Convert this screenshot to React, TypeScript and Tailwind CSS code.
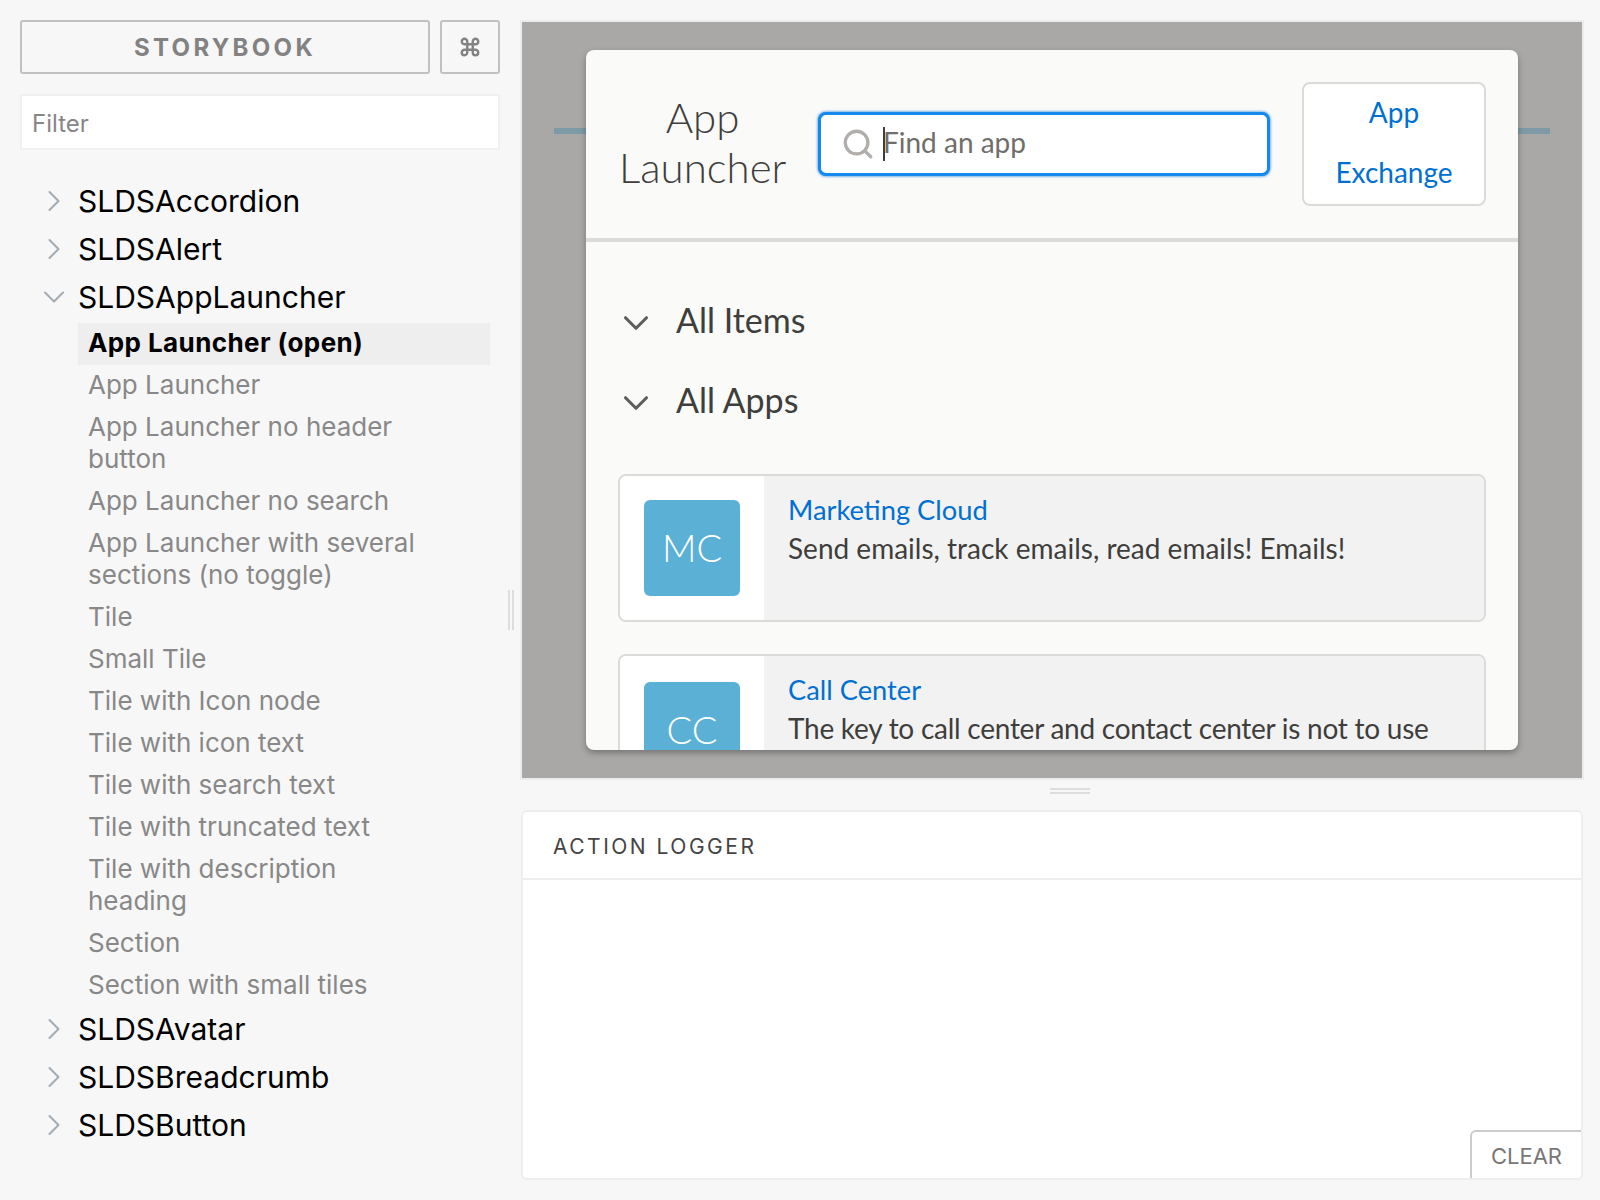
import { ChevronDown, ChevronRight, Command, Search } from "lucide-react";

const sans = "font-['Inter','Liberation_Sans',sans-serif]";
const card = "font-['Lato','Open_Sans',sans-serif]";

const children = [
  "App Launcher",
  "App Launcher no header button",
  "App Launcher no search",
  "App Launcher with several sections (no toggle)",
  "Tile",
  "Small Tile",
  "Tile with Icon node",
  "Tile with icon text",
  "Tile with search text",
  "Tile with truncated text",
  "Tile with description heading",
  "Section",
  "Section with small tiles",
];

const TreeRoot = ({ label, open = false }: { label: string; open?: boolean }) => (
  <div className="flex h-[48px] items-center">
    <div className="w-[78px] shrink-0 pl-[36px]">
      {open ? (
        <ChevronDown size={36} strokeWidth={1.4} className="text-[#a3acb3]" />
      ) : (
        <ChevronRight size={36} strokeWidth={1.4} className="text-[#a3acb3]" />
      )}
    </div>
    <span className="text-[30px] leading-[32px] text-black">{label}</span>
  </div>
);

const Tile = ({ initials, title, text, low = false }: { initials: string; title: string; text: string; low?: boolean }) => (
  <div className="flex h-[148px] shrink-0 overflow-hidden rounded-[8px] border-2 border-[#dddbda]">
    <div className={`w-[144px] shrink-0 bg-white pl-[24px] ${low ? "pt-[26px]" : "pt-[24px]"}`}>
      <div className="flex h-[96px] w-[96px] items-center justify-center rounded-[6px] bg-[#5ab0d5] pb-[2px] text-[38px] font-light text-white">
        {initials}
      </div>
    </div>
    <div className="flex-1 bg-[#f3f2f2] pl-[24px] pr-[24px] pt-[15px]">
      <div className="text-[27.3px] leading-[38px] text-[#0070d2]">{title}</div>
      <div className={`text-[28px] leading-[38px] text-[#3e3e3c] ${low ? "tracking-[-0.25px]" : ""}`}>{text}</div>
    </div>
  </div>
);

const Section = ({ label }: { label: string }) => (
  <div className="flex h-[80px] items-center">
    <ChevronDown size={42} strokeWidth={1.8} className="ml-[-3px] mr-[19px] mt-[3px] text-[#5f5e5c]" />
    <span className="mb-[4px] text-[34px] text-[#3e3e3c]">{label}</span>
  </div>
);

export default function App() {
  return (
    <div className={`flex h-[1200px] w-[1600px] overflow-hidden bg-[#f7f7f7] ${sans}`}>
      {/* sidebar */}
      <aside className="w-[510px] shrink-0 pl-[20px] pt-[20px]">
        <div className="flex gap-[10px]">
          <div className="flex h-[54px] w-[410px] items-center justify-center rounded-[3px] border-2 border-[#c1c1c1] pt-[2px] text-[24px] font-bold tracking-[3.3px] text-[#828282]">
            STORYBOOK
          </div>
          <div className="flex h-[54px] w-[60px] items-center justify-center rounded-[3px] border-2 border-[#c1c1c1]">
            <Command size={22} strokeWidth={2.6} className="text-[#828282]" />
          </div>
        </div>
        <div className="mt-[20px] flex h-[56px] w-[480px] items-center border-2 border-[#f0f0f0] bg-white pl-[10px] pt-[4px] text-[24px] text-[#868686]">
          Filter
        </div>
        <nav className="ml-[-20px] mt-[27px]">
          <TreeRoot label="SLDSAccordion" />
          <TreeRoot label="SLDSAlert" />
          <TreeRoot label="SLDSAppLauncher" open />
          <div className="mb-[-2px] ml-[78px] w-[412px] pt-[2px]">
            <div className="bg-[#eeeeee] px-[10px] pb-[6px] pt-[4px] text-[26px] font-bold leading-[32px] tracking-[0.4px] text-black">
              App Launcher (open)
            </div>
            {children.map((c) => (
              <div key={c} className="pb-[6px] pl-[10px] pr-[60px] pt-[4px] text-[26px] leading-[32px] text-[#888888]">
                {c}
              </div>
            ))}
          </div>
          <TreeRoot label="SLDSAvatar" />
          <TreeRoot label="SLDSBreadcrumb" />
          <TreeRoot label="SLDSButton" />
        </nav>
      </aside>

      {/* vertical resize handle */}
      <div className="w-[12px] shrink-0 pt-[590px]">
        <div className="ml-[-2px] h-[40px] w-[6px] border-x-2 border-[#dddddd]" />
      </div>

      <main className="w-[1061px] shrink-0 pt-[22px]">
        {/* preview */}
        <div className={`relative h-[756px] w-[1060px] bg-[#a9a8a6] pt-[28px] shadow-[0_0_0_2px_#ececec] ${card}`}>
          <div className="absolute left-[32px] right-[32px] top-[106px] h-[6px] bg-[#7e9aa6]" />
          <div className="relative ml-[64px] flex h-[700px] w-[932px] flex-col overflow-hidden rounded-[8px] bg-[#fafaf9] shadow-[0_3px_6px_rgba(0,0,0,0.3)]">
            <header className="flex h-[192px] shrink-0 border-b-4 border-[#dddbda] pl-[33px] pr-[32px]">
              <div className="mt-[42px] w-[167px] text-center text-[42px] font-light leading-[50px] text-[#3e3e3c]">
                App Launcher
              </div>
              <div className="ml-[32px] mt-[62px] flex h-[64px] w-[452px] items-center rounded-[8px] border-[3px] border-[#1589ee] bg-white pl-[20px] shadow-[0_0_3px_#0070d2]">
                <Search size={34} strokeWidth={2.3} className="mr-[8px] text-[#b0adab]" />
                <span className="h-[34px] w-[2px] bg-[#3e3e3c]" />
                <span className="mb-[4px] ml-[-2px] text-[28px] text-[#706e6b]">Find an app</span>
              </div>
              <div className="ml-[32px] mt-[32px] flex h-[124px] w-[184px] items-center justify-center rounded-[8px] border-2 border-[#dddbda] bg-white px-[30px] pb-[4px] text-center text-[28px] leading-[60px] text-[#0070d2]">
                App Exchange
              </div>
            </header>
            <div className="flex flex-col pl-[32px] pr-[32px] pt-[39px]">
              <Section label="All Items" />
              <Section label="All Apps" />
              <div className="mt-[33px] flex flex-col gap-[32px]">
                <Tile initials="MC" title="Marketing Cloud" text="Send emails, track emails, read emails! Emails!" />
                <Tile
                  low
                  initials="CC"
                  title="Call Center"
                  text="The key to call center and contact center is not to use"
                />
              </div>
            </div>
          </div>
        </div>

        {/* horizontal resize handle */}
        <div className="flex h-[32px] pl-[528px] pt-[10px]">
          <div className="h-[6px] w-[40px] border-y-2 border-[#dddddd]" />
        </div>

        {/* action logger */}
        <section className="relative ml-[-1px] h-[370px] w-[1062px] overflow-hidden rounded-[6px] border-2 border-[#eeeeee] bg-white">
          <div className="flex h-[68px] items-center border-b-2 border-[#eeeeee] pl-[30px] pt-[3px] text-[21px] tracking-[2.5px] text-[#444444]">
            ACTION LOGGER
          </div>
          <div className="absolute bottom-0 right-0 flex h-[48px] w-[111px] items-center justify-center rounded-tl-[6px] border-l-2 border-t-2 border-[#cccccc] bg-white pt-[3px] text-[22px] text-[#777777]">
            CLEAR
          </div>
        </section>
      </main>
    </div>
  );
}
